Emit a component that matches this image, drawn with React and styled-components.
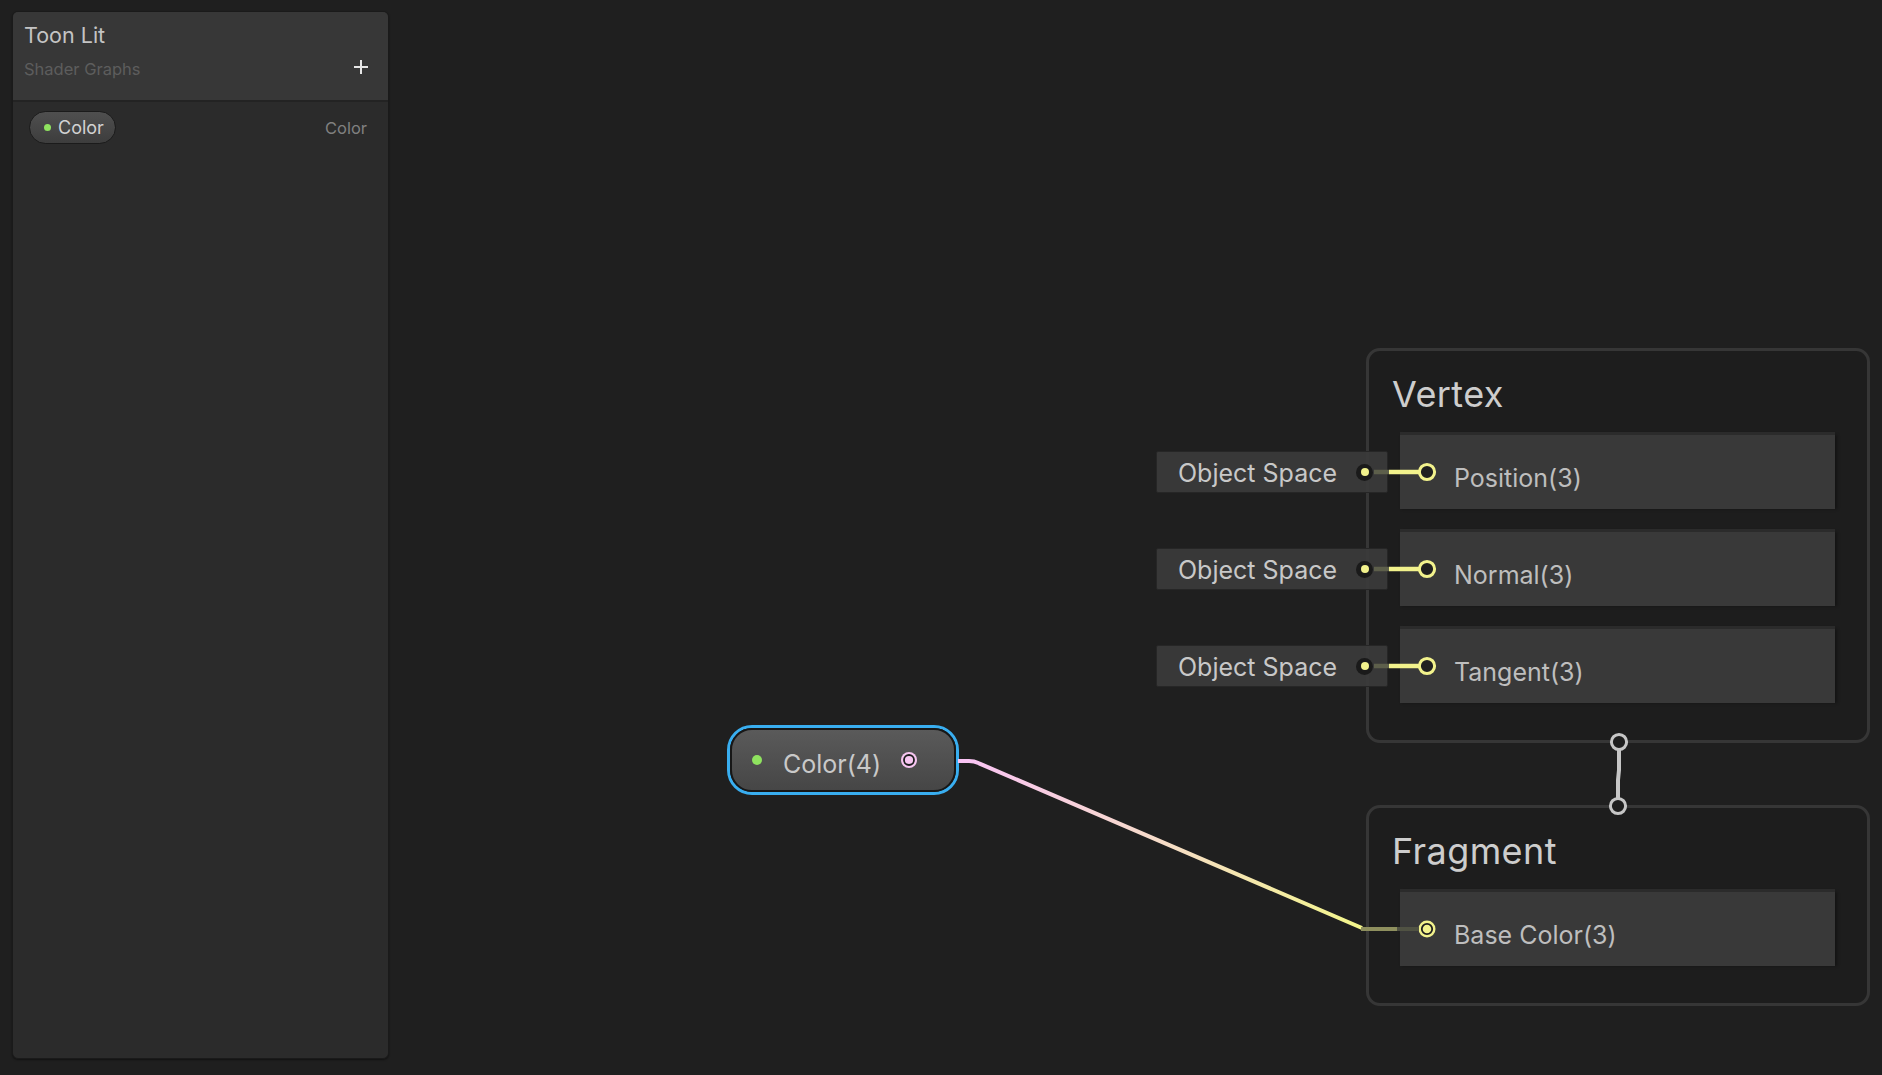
import React from "react";
import styled, { createGlobalStyle } from "styled-components";

const GlobalStyle = createGlobalStyle`
  html, body { margin: 0; padding: 0; background: #1f1f1f; }
  body {
    font-family: Inter, "Noto Sans", "Liberation Sans", sans-serif;
    overflow: hidden;
    -webkit-font-smoothing: antialiased;
  }
  #root { width: 1882px; height: 1075px; }
`;

const YELLOW = "#f2f28c";
const PINK = "#f7c6f1";

const Page = styled.div`
  display: flex;
  align-items: flex-start;
  width: 1882px;
  height: 1075px;
  background: #1f1f1f;
  overflow: hidden;
`;

/* ---------- Blackboard ---------- */
const Blackboard = styled.aside`
  flex: none;
  margin: 11px 0 0 12px;
  width: 377px;
  height: 1048px;
  box-sizing: border-box;
  display: flex;
  flex-direction: column;
  background: #2b2b2b;
  border: 1px solid #1a1a1a;
  border-radius: 6px;
  overflow: hidden;
  box-shadow: 0 1px 2px rgba(0, 0, 0, 0.45);
`;

const BoardHeader = styled.header`
  height: 90px;
  box-sizing: border-box;
  padding: 10px 19px 0 11px;
  background: #373737;
  border-bottom: 2px solid #232323;
`;

const BoardTitle = styled.div`
  font-size: 21.5px;
  line-height: 26px;
  color: #c4c4c4;
`;

const SubRow = styled.div`
  display: flex;
  justify-content: space-between;
  align-items: center;
  margin-top: 11px;
`;

const Subtitle = styled.div`
  font-size: 16.5px;
  line-height: 20px;
  color: #5d5d5d;
`;

const AddButton = styled.button`
  display: flex;
  margin-top: -4px;
  padding: 0;
  border: none;
  background: none;
  cursor: pointer;
`;

const BoardBody = styled.div`
  padding: 9px 21px 0 16px;
`;

const FieldRow = styled.div`
  display: flex;
  justify-content: space-between;
  align-items: center;
`;

const Pill = styled.div`
  display: inline-flex;
  align-items: center;
  gap: 7px;
  height: 33px;
  box-sizing: border-box;
  padding: 0 11px 0 14px;
  border-radius: 17px;
  border: 1px solid #1b1b1b;
  background: linear-gradient(180deg, #4f4f4f, #3d3d3d);
  color: #d2d2d2;
  font-size: 18px;
`;

const Dot = styled.span`
  flex: none;
  width: ${(p) => p.$size}px;
  height: ${(p) => p.$size}px;
  border-radius: 50%;
  background: #8fe35f;
`;

const FieldType = styled.span`
  font-size: 16.5px;
  color: #808080;
`;

/* ---------- Graph ---------- */
const GraphView = styled.main`
  flex: 1;
  position: relative;
  height: 1075px;
`;

const ColorNode = styled.div`
  position: absolute;
  left: 338px;
  top: 725px;
  width: 232px;
  height: 70px;
  box-sizing: border-box;
  border: 3px solid #39aef0;
  border-radius: 25px;
  z-index: 2;
`;

const NodeBody = styled.div`
  height: 100%;
  box-sizing: border-box;
  display: flex;
  align-items: center;
  padding: 0 36px 0 20px;
  border: 2px solid #171717;
  border-radius: 22px;
  background: linear-gradient(180deg, #5a5a5a, #464646);
`;

const NodeLabel = styled.span`
  margin-left: 21px;
  padding-top: 8px;
  font-size: 25px;
  line-height: 28px;
  color: #c9c9c9;
`;

const PortSvg = styled.svg`
  flex: none;
  margin-left: auto;
  display: block;
`;

const Stack = styled.div`
  position: absolute;
  left: 977px;
  top: 348px;
  width: 504px;
  display: flex;
  flex-direction: column;
  gap: 62px;
  z-index: 1;
`;

const Context = styled.section`
  box-sizing: border-box;
  display: flex;
  flex-direction: column;
  padding: 23px 32px 37px 31px;
  border: 3px solid #363636;
  border-radius: 14px;
  background: #1d1d1d;
`;

const ContextTitle = styled.h2`
  margin: 0 0 21px -8px;
  font-size: 36px;
  line-height: 40px;
  letter-spacing: 0.4px;
  font-weight: 400;
  color: #cdcdcd;
`;

const SlotList = styled.div`
  display: flex;
  flex-direction: column;
  gap: 23px;
`;

const Slot = styled.div`
  position: relative;
  display: flex;
  align-items: center;
  gap: 18px;
  height: 74px;
  box-sizing: border-box;
  padding-left: 18px;
  background: #393939;
  box-shadow: 0 -3px 0 #2b2b2b, 2px 0 3px rgba(0, 0, 0, 0.35);
`;

const SlotLabel = styled.span`
  padding-top: 11px;
  font-size: 25px;
  line-height: 28px;
  color: #bebebe;
`;

const SpaceField = styled.div`
  position: absolute;
  right: calc(100% + 12px);
  top: 50%;
  transform: translateY(-50%);
  width: 232px;
  height: 42px;
  box-sizing: border-box;
  display: flex;
  align-items: center;
  justify-content: space-between;
  padding: 0 14px 0 21px;
  background: rgba(58, 58, 58, 0.93);
  border: 1px solid #262626;
  border-radius: 2px;
  font-size: 25px;
  color: #c8c8c8;
`;

const SpaceLabel = styled.span`
  padding-top: 1px;
  line-height: 28px;
`;

const InPort = styled.span`
  flex: none;
  position: relative;
  width: 17px;
  height: 17px;
  border-radius: 50%;
  background: #1a1a1a;
  &::after {
    content: "";
    position: absolute;
    left: 4.5px;
    top: 4.5px;
    width: 8px;
    height: 8px;
    border-radius: 50%;
    background: ${YELLOW};
  }
`;

const Overlay = styled.svg`
  position: absolute;
  inset: 0;
  width: 100%;
  height: 100%;
  pointer-events: none;
  z-index: 3;
`;

const RingSvg = styled.svg`
  flex: none;
  display: block;
  margin: -1px;
`;

function RingPort({ connected, color = YELLOW }) {
  return (
    <RingSvg width="20" height="20" viewBox="0 0 20 20">
      {connected ? (
        <>
          <circle cx="10" cy="10" r="8.5" fill={color} />
          <circle cx="10" cy="10" r="5.2" fill="none" stroke="#1e1e1e" strokeWidth="1.8" />
        </>
      ) : (
        <circle cx="10" cy="10" r="7.6" fill="#202020" stroke={color} strokeWidth="3" />
      )}
    </RingSvg>
  );
}

const vertexSlots = ["Position(3)", "Normal(3)", "Tangent(3)"];

export default function App() {
  const edgeYs = [472, 569, 666];
  return (
    <>
      <GlobalStyle />
      <Page>
        <Blackboard>
          <BoardHeader>
            <BoardTitle>Toon Lit</BoardTitle>
            <SubRow>
              <Subtitle>Shader Graphs</Subtitle>
              <AddButton aria-label="Add">
                <svg width="16" height="16" viewBox="0 0 16 16">
                  <path d="M8 1v14M1 8h14" stroke="#e6e6e6" strokeWidth="2" />
                </svg>
              </AddButton>
            </SubRow>
          </BoardHeader>
          <BoardBody>
            <FieldRow>
              <Pill>
                <Dot $size={7} />
                Color
              </Pill>
              <FieldType>Color</FieldType>
            </FieldRow>
          </BoardBody>
        </Blackboard>

        <GraphView>
          <ColorNode>
            <NodeBody>
              <Dot $size={10} />
              <NodeLabel>Color(4)</NodeLabel>
              <PortSvg width="18" height="18" viewBox="0 0 18 18">
                <circle cx="9" cy="9" r="8" fill={PINK} />
                <circle cx="9" cy="9" r="5" fill="none" stroke="#1e1e1e" strokeWidth="1.8" />
              </PortSvg>
            </NodeBody>
          </ColorNode>

          <Stack>
            <Context>
              <ContextTitle>Vertex</ContextTitle>
              <SlotList>
                {vertexSlots.map((s) => (
                  <Slot key={s}>
                    <SpaceField>
                      <SpaceLabel>Object Space</SpaceLabel>
                      <InPort />
                    </SpaceField>
                    <RingPort />
                    <SlotLabel>{s}</SlotLabel>
                  </Slot>
                ))}
              </SlotList>
            </Context>
            <Context>
              <ContextTitle>Fragment</ContextTitle>
              <SlotList>
                <Slot>
                  <RingPort connected />
                  <SlotLabel>Base Color(3)</SlotLabel>
                </Slot>
              </SlotList>
            </Context>
          </Stack>

          <Overlay viewBox="0 0 1493 1075">
            <defs>
              <linearGradient id="colorEdge" gradientUnits="userSpaceOnUse" x1="569" y1="760" x2="973" y2="928">
                <stop offset="0" stopColor="#f9c3f5" />
                <stop offset="0.5" stopColor="#f6dcc8" />
                <stop offset="1" stopColor="#f3f68a" />
              </linearGradient>
            </defs>
            {edgeYs.map((y) => (
              <g key={y}>
                <line x1="985" y1={y} x2="1000" y2={y} stroke="#5d5f4b" strokeWidth="4.5" />
                <line x1="1000" y1={y} x2="1030" y2={y} stroke={YELLOW} strokeWidth="4.5" />
              </g>
            ))}
            <path
              d="M569 761 L580 761 Q585 761 590 763.3 L973 928"
              fill="none"
              stroke="url(#colorEdge)"
              strokeWidth="4"
              strokeLinejoin="round"
            />
            <line x1="972" y1="929" x2="1008" y2="929" stroke="#8e8f5e" strokeWidth="4" />
            <line x1="1008" y1="929" x2="1030" y2="929" stroke="#505243" strokeWidth="4" />
            <path d="M1230 750 L1230 770 L1229 780 L1229 798" fill="none" stroke="#c6c6c6" strokeWidth="4" />
            <circle cx="1230" cy="742" r="7.6" fill="#1e1e1e" stroke="#c6c6c6" strokeWidth="3" />
            <circle cx="1229" cy="806" r="7.6" fill="#1e1e1e" stroke="#c6c6c6" strokeWidth="3" />
          </Overlay>
        </GraphView>
      </Page>
    </>
  );
}
